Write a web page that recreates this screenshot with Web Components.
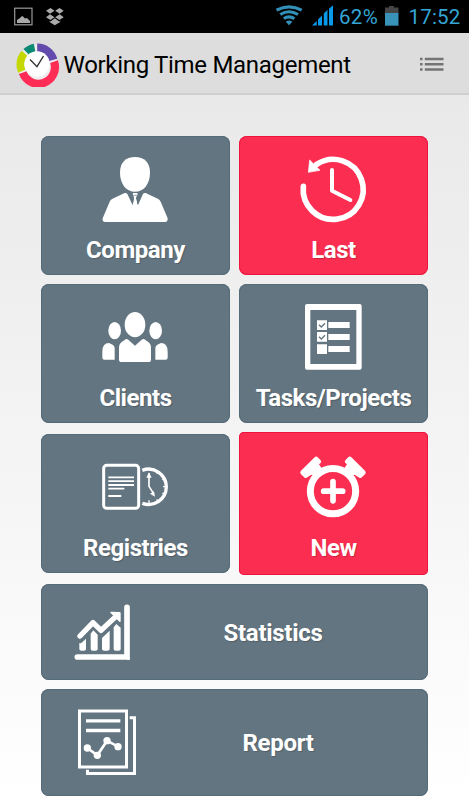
<!DOCTYPE html>
<html lang="en"><head><meta charset="utf-8"><title>Working Time Management</title>
<style>html,body{margin:0;height:100%;overflow:hidden}body{font-family:Roboto,"Liberation Sans",sans-serif}</style></head>
<body>
<wt-app>
<wt-tile label="Company"><svg viewBox="207 81 219 219"><path d="M315 96C343 96 360 112 360 143C360 176 342 200 315 200C288 200 270 176 270 143C270 112 287 96 315 96Z"/><path d="M284 204Q290 203 292 207L308 240L312 218L308 209L309 204H322L323 209L318 218L324 240L339 207Q341 203 347 204L385 222Q390 225 392 230L413 280Q414 291 405 291H226Q216 291 218 280L239 230Q241 225 246 222Z"/><path d="M294 204L308 240L312 218L306 208ZM337 204L323 240L319 218L325 208Z" fill="#637580"/><path d="M308 211H323" stroke="#637580" stroke-width="2"/></svg></wt-tile>
<wt-tile label="Last" red><svg viewBox="201 81 219 219"><g fill="none" stroke="#fff" stroke-linecap="round"><path d="M220 184A90 90 0 1 0 260 118" stroke-width="17"/><path d="M306 135V197L361 225" stroke-width="12" stroke-linejoin="round"/></g><path d="M239 105L270 136L235 142Z" stroke="#fff" stroke-width="2"/></svg></wt-tile>
<wt-tile label="Clients"><svg viewBox="207 75 219 219"><ellipse cx="315" cy="149" rx="31" ry="38"/><ellipse cx="254" cy="167" rx="19" ry="26"/><ellipse cx="377" cy="167" rx="19" ry="26"/><path d="M267 218Q267 206 276 200L287 193Q291 191 295 194L315 212L335 194Q339 191 343 193L354 200Q363 206 363 218V254Q363 261 355 261H275Q267 261 267 254ZM217 230Q217 204 237 204L248 209Q254 213 254 219V254H223Q217 254 217 248ZM413 230Q413 204 393 204L382 209Q376 213 376 219V254H407Q413 254 413 248Z"/></svg></wt-tile>
<wt-tile label="Tasks/Projects"><svg viewBox="201 75 219 219"><path fill-rule="evenodd" d="M231 87H389Q395 87 395 93V278Q395 284 389 284H231Q225 284 225 278V93Q225 87 231 87ZM241 105V267H379V105Z"/><path d="M261 136h30v29h-30zM261 171h30v29h-30zM261 208h30v29h-30zM295 141h64v18h-64zM295 177h64v18h-64zM295 213h64v18h-64z"/><path d="M267 149L274 156L285 145M267 185L274 192L285 181" fill="none" stroke="#637580" stroke-width="4"/></svg></wt-tile>
<wt-tile label="Registries"><svg viewBox="207 75 219 219"><g fill="none" stroke="#fff"><rect x="221" y="121" width="105" height="129" rx="9" stroke-width="9"/><path d="M235 157H312M235 168.500H312M235 180H312M235 191H283M235 213H274" stroke-width="5.500"/><path d="M337 136A53 53 0 1 1 337 235" stroke-width="10"/><path d="M357 145V184L371 206" stroke-width="5"/><path d="M357 226V240M384 139L380 146M404 160L397 164M411 185H399M404 208L397 204M384 230L380 223" stroke-width="4"/></g><path d="M357 142L365 158H349ZM375 215L360 206L372 199Z"/></svg></wt-tile>
<wt-tile label="New" red tall><svg viewBox="201 67.5 219 219"><circle cx="309" cy="197" r="68" fill="none" stroke="#fff" stroke-width="21"/><path d="M309 168V226M281 197H338" stroke="#fff" stroke-width="17" stroke-linecap="round"/><path d="M254 95Q259 91 264 96L272 104Q276 109 271 113L267 116L276 130L250 150L244 148L231 156Q226 160 221 154L213 146Q208 141 213 136Z"/><path transform="matrix(-1 0 0 1 618 0)" d="M254 95Q259 91 264 96L272 104Q276 109 271 113L267 116L276 130L250 150L244 148L231 156Q226 160 221 154L213 146Q208 141 213 136Z"/></svg></wt-tile>
<wt-tile label="Statistics" wide><svg viewBox="126 75 210 192"><g fill="none" stroke="#fff" stroke-linecap="round"><path d="M291 97V246H142" stroke-width="17"/><path d="M150 183L189 143L213 166L258 124" stroke-width="16" stroke-linejoin="round"/></g><path d="M291 246h8v8h-8zM241 113Q239 110 244 110L268 111Q272 111 272 115V138Q272 142 268 140Z"/><path d="M148 204L153 205L168 191V222Q168 227 162 227H154Q148 227 148 222ZM182 176L190 166L203 179V222Q203 227 197 227H188Q182 227 182 222ZM216 189L239 167V222Q239 227 232 227H223Q216 227 216 222ZM251 157L259 147L272 158V222Q272 227 266 227H257Q251 227 251 222Z"/></svg></wt-tile>
<wt-tile label="Report" wide style="--shift:5px"><svg viewBox="126 390 210 222"><g fill="none" stroke="#fff"><path d="M148.500 408H289.500V576H148.500Z" stroke-width="9"/><path d="M299 428H313.500V595.500H168M172.500 584V600" stroke-width="9"/><path d="M168 437.500H271M168 466.500H271" stroke-width="10"/><path d="M172 519L202 541L231 497L264 515" stroke-width="8"/></g><circle cx="172" cy="519" r="11"/><circle cx="202" cy="541" r="11"/><circle cx="231" cy="497" r="11"/><circle cx="264" cy="515" r="11"/></svg></wt-tile>
</wt-app>
<script>
const define=(name,html,setup)=>customElements.define(name,class extends HTMLElement{
 constructor(){super();this.attachShadow({mode:'open'}).innerHTML=html}
 connectedCallback(){if(setup)setup(this)}
});
define('wt-status',`<style>
:host{display:flex;height:33px;background:#000;color:#33a6d6;font-size:20.5px;line-height:33px;box-sizing:border-box}
svg{flex:none;display:block}.p{width:41px;letter-spacing:.3px;padding-left:5px;box-sizing:border-box}.t{letter-spacing:.2px;white-space:nowrap;padding-left:.5px}span{padding-top:1px}</style>
<svg width="334" height="33" viewBox="0 0 334 33"><rect x="14.700" y="8.200" width="17.300" height="16.600" fill="none" stroke="#999" stroke-width="1.200"/><path fill="#aaa" d="M17 23v-3l3-2 2-2 1 .5 2 2 2-.5 3 3v2z"/>
<path fill="#aaa" d="M50.500 8l4 2.800-4.500 3-4-3zM59.500 8l4.200 2.800-4 3-4.500-3zM46 17.300l4-3 4.500 3-4 2.800zM63.700 17.300l-4-3-4.500 3 4.300 2.800zM49.500 21.300l1 .2 4.300-3.200 4.500 3.200 1-.2v.6l-5.500 3.300-5.300-3.300z"/>
<g fill="none" stroke="#3290b8" stroke-width="3.100"><path d="M276.500 10.200Q289 3.500 301.700 10.200M280.300 14.500Q289 9 298 14.500M283.800 18.600Q289 15 294.400 18.600"/></g><path fill="#3290b8" d="M285.800 21.700Q289 19.500 292.400 21.700L289 25.200z"/>
<path fill="#0a98e8" d="M312 25.500l4.700-4.600v4.600zM318 25.500v-6l4-4v10zM323.800 25.500v-12l3.700-3.700v15.700zM329 25.500V8.700l4-3.500v20.300z"/></svg>
<span class="p">62%</span><svg width="33" height="33" viewBox="375 0 33 33"><path fill="#454545" d="M385 13V7.500h4V6h5v1.500h4.500V13z"/><path fill="#3993b8" d="M385 13h13.500v12.700H385z"/></svg><span class="t">17:52</span>`);
define('wt-header',`<style>
:host{display:flex;align-items:center;height:62px;background:#ddd;box-sizing:border-box;border-bottom:2px solid #cfcfcf;box-shadow:0 1px 0 #b2b2b2,0 2px 0 #d8d8d8;padding:2px 0 0 15px}
svg{display:block;flex:none}h1{margin:0;width:354px;box-sizing:border-box;padding:1px 0 0 2.500px;font-weight:400;font-size:24px;line-height:30px;color:#000;white-space:nowrap;letter-spacing:-.3px}.menu{margin-left:3px}</style>
<svg width="46" height="46" viewBox="15 41 46 46"><circle cx="37.500" cy="64.300" r="16" fill="none" stroke="#eee" stroke-width="8"/><g fill="none" stroke-width="8.200"><path stroke="#634aad" d="M37.200 47.700A16.500 16.500 0 0 1 53.300 59.900"/><path stroke="#ff2d55" d="M54 61.700A16.500 16.500 0 0 1 22.800 72.700"/><path stroke="#c4d800" d="M21.900 71.200A16.500 16.500 0 0 1 24.800 53.400"/><path stroke="#0a8a73" d="M26.300 52A16.500 16.500 0 0 1 34.600 47.700"/></g><circle cx="37" cy="64" r="12.700" fill="#fff"/><path d="M30 59.500l7 7.200 6.500-10.700" fill="none" stroke="#333" stroke-width="1.400"/></svg>
<h1>Working Time Management</h1><svg class="menu" width="26" height="18" viewBox="419 55 26 18"><path d="M421 59h2.600m2.200 0H444.500M421 64.300h2.600m2.200 0H444.500M421 69.600h2.600m2.200 0H444.500" stroke="#747474" stroke-width="2.500"/></svg>`);
define('wt-app',`<style>
:host{display:flex;flex-direction:column;height:800px;width:469px;background:#fff}
main{flex:1;display:grid;grid-template-columns:189px 189px;grid-template-rows:139px 138.500px 143.500px 96px 106.500px;gap:9px;padding:41px 0 0 41px;background:linear-gradient(#e9e9e9,#fff)}</style>
<wt-status></wt-status><wt-header></wt-header><main><slot></slot></main>`);
define('wt-tile',`<style>
:host{display:flex;flex-direction:column;align-items:center;box-sizing:border-box;padding-top:16px;height:138.500px;align-self:center;border-radius:8px;background:#637580;box-shadow:inset 0 0 0 1px #546b79;color:#fff}
:host([red]){background:#fb2e51;box-shadow:inset 0 0 0 1px #ed1540}
:host([tall]){height:143.500px;border-radius:5px}
:host([wide]){grid-column:1/3;flex-direction:row;height:100%;padding:0 0 0 31px}
::slotted(svg){width:73px;height:73px;fill:#fff;flex:none}
:host([wide]) ::slotted(svg){width:70px;height:auto}
b{font-size:24px;font-weight:700;line-height:28px;margin-top:11px;white-space:nowrap;letter-spacing:-.45px;text-shadow:1px 1px 1px #0003}
:host([tall]) b{margin-top:13px}
:host([wide]) b{width:262px;text-align:center;margin:2px 0 0;letter-spacing:-.3px;padding-left:var(--shift,0)}
</style><slot></slot><b></b>`,e=>{e.shadowRoot.querySelector('b').textContent=e.getAttribute('label')});
</script></body></html>
